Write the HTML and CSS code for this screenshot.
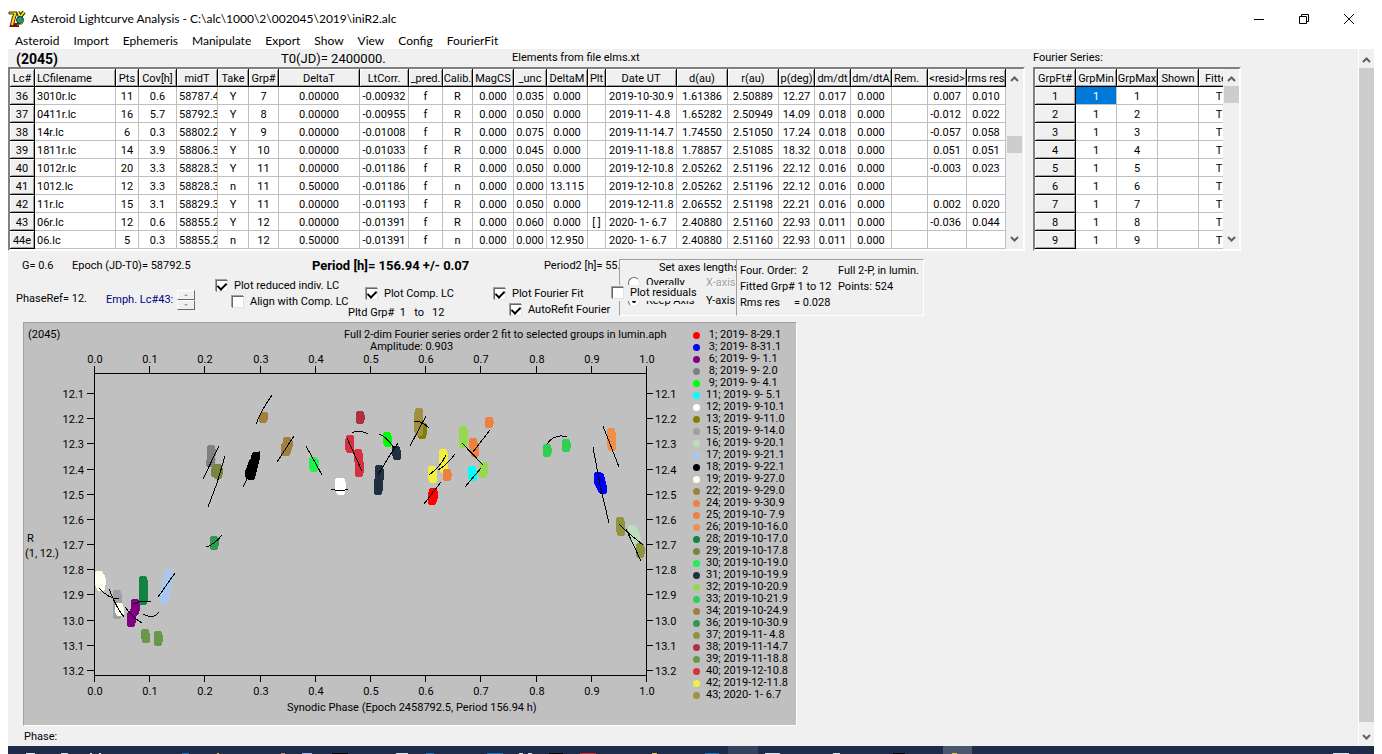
FILE: index.html
```html
<!DOCTYPE html>
<html lang="en">
<head>
<meta charset="utf-8">
<title>Asteroid Lightcurve Analysis</title>
<link rel="stylesheet" href="styles.css">
</head>
<body>
<header class="titlebar">
  <svg class="app-icon" width="18" height="18" viewBox="0 0 18 18" aria-hidden="true">
    <path d="M1 2h8v2L7 8H4l2-4H1z" fill="#f4e800" stroke="#3a3500" stroke-width="1"/>
    <path d="M10 2l2 5 4-5" fill="none" stroke="#222" stroke-width="4"/>
    <path d="M10 2l2 5 4-5" fill="none" stroke="#f4e800" stroke-width="2"/>
    <path d="M6 7l-2 8h7" fill="none" stroke="#7a1010" stroke-width="4"/>
    <path d="M6 7l-2 8" stroke="#f4e800" stroke-width="2"/>
    <circle cx="12" cy="10" r="3.500" fill="#1d9c6c" stroke="#10304a"/>
    <path d="M9 15l5-1 2-4" fill="none" stroke="#a08a10" stroke-width="1"/>
  </svg>
  <h1 class="title">Asteroid Lightcurve Analysis - C:\alc\1000\2\002045\2019\iniR2.alc</h1>
  <div class="window-buttons">
    <button type="button" aria-label="Minimize"><svg width="12" height="12" viewBox="0 0 12 12"><path d="M1 6.500h10" stroke="#000"/></svg></button>
    <button type="button" aria-label="Restore"><svg width="12" height="12" viewBox="0 0 12 12"><path d="M1.500 3.500h7v7h-7zM3.500 3.500v-2h7v7h-2" fill="none" stroke="#000"/></svg></button>
    <button type="button" aria-label="Close"><svg width="12" height="12" viewBox="0 0 12 12"><path d="M1 1l10 10M11 1L1 11" stroke="#000"/></svg></button>
  </div>
</header>
<nav class="menubar">
  <button type="button">Asteroid</button><button type="button">Import</button><button type="button">Ephemeris</button><button type="button">Manipulate</button><button type="button">Export</button><button type="button">Show</button><button type="button">View</button><button type="button">Config</button><button type="button">FourierFit</button>
</nav>
<main class="form">
  <div class="content">
    <div class="captions">
      <strong class="object">(2045)</strong><span class="big">T0(JD)= 2400000.</span><span>Elements from file elms.xt</span><span>Fourier Series:</span>
    </div>
    <div class="grids">
      <div class="sunken">
        <table class="grid lc" id="lc">
          <colgroup><col class="w25"><col class="w81"><col class="w23"><col class="w38"><col class="w41"><col class="w31"><col class="w30"><col class="w81"><col class="w49"><col class="w34"><col class="w30"><col class="w41"><col class="w33"><col class="w41"><col class="w18"><col class="w71"><col class="w51"><col class="w51"><col class="w36"><col class="w36"><col class="w41"><col class="w36"><col class="w39"><col class="w39"></colgroup>
          <thead><tr><th>Lc#</th><th class="left">LCfilename</th><th>Pts</th><th>Cov[h]</th><th>midT</th><th>Take</th><th>Grp#</th><th>DeltaT</th><th>LtCorr.</th><th>_pred.</th><th>Calib.</th><th>MagCS</th><th>_unc</th><th>DeltaM</th><th>Plt</th><th>Date UT</th><th>d(au)</th><th>r(au)</th><th>p(deg)</th><th>dm/dt</th><th>dm/dtA</th><th class="left">Rem.</th><th>&lt;resid&gt;</th><th>rms res</th></tr></thead>
          <tbody></tbody>
        </table>
        <div class="scrollbar"><svg class="chev" width="9" height="6" viewBox="0 0 9 6"><path d="M1 5l3.500-3.500L8 5" /></svg><i class="thumb mid"></i><svg class="chev" width="9" height="6" viewBox="0 0 9 6"><path d="M1 1l3.500 3.500L8 1"/></svg></div>
      </div>
      <div class="sunken">
        <div class="clip">
        <table class="grid ft" id="ft">
          <colgroup><col class="w41"><col class="w41"><col class="w41"><col class="w41"><col class="w41"></colgroup>
          <thead><tr><th>GrpFt#</th><th>GrpMin</th><th>GrpMax</th><th>Shown</th><th>Fitted</th></tr></thead>
          <tbody></tbody>
        </table>
        </div>
        <div class="scrollbar narrow"><svg class="chev" width="9" height="6" viewBox="0 0 9 6"><path d="M1 5l3.500-3.500L8 5"/></svg><i class="thumb top"></i><svg class="chev" width="9" height="6" viewBox="0 0 9 6"><path d="M1 1l3.500 3.500L8 1"/></svg></div>
      </div>
    </div>
    <section class="controls">
      <div class="settings">
        <div class="values"><span>G= 0.6</span><span>Epoch (JD-T0)= 58792.5</span><strong>Period [h]= 156.94 +/- 0.07</strong><span>Period2 [h]= 55.</span></div>
        <div class="options">
          <span class="phase-ref">PhaseRef= 12.</span>
          <span class="emph">Emph. Lc#43:</span>
          <div class="spinner"><button type="button" aria-label="Next"><i class="up"></i></button><button type="button" aria-label="Previous"><i class="down"></i></button></div>
          <div class="stack"><label><input type="checkbox" checked>Plot reduced indiv. LC</label><label class="indent"><input type="checkbox">Align with Comp. LC</label></div>
          <div class="stack low"><label class="comp"><input type="checkbox" checked>Plot Comp. LC</label><span class="pltd">Pltd Grp#&nbsp; 1 &nbsp; to &nbsp; 12</span></div>
          <div class="stack low"><label><input type="checkbox" checked>Plot Fourier Fit</label><label class="indent"><input type="checkbox" checked>AutoRefit Fourier</label></div>
        </div>
      </div>
      <fieldset class="panel axes">
        <span class="axes-title">Set axes lengths</span>
        <label><input type="radio" name="axes">Overally</label><span class="off">X-axis</span>
        <label><input type="radio" name="axes" checked>Keep Axis</label><span>Y-axis</span>
        <label class="residuals"><input type="checkbox">Plot residuals</label>
      </fieldset>
      <div class="panel stats">
        <span>Four. Order:&nbsp; 2</span><span>Full 2-P, in lumin.</span>
        <span>Fitted Grp# 1 to 12</span><span>Points: 524</span>
        <span class="rms"><span>Rms res</span><span>= 0.028</span></span>
      </div>
    </section>
    <section class="chart">
      <svg class="plot" width="664" height="402" viewBox="24 323 664 402" id="plot" role="img" aria-label="Lightcurve">
        <g id="axes" class="axis"></g>
        <g id="labels"></g>
        <text x="28" y="338">(2045)</text>
        <text x="344" y="338">Full 2-dim Fourier series order 2 fit to selected groups in lumin.aph</text>
        <text x="370" y="350">Amplitude: 0.903</text>
        <text x="27" y="542">R</text>
        <text x="25" y="557">(1, 12.)</text>
        <text x="287" y="711">Synodic Phase (Epoch 2458792.5, Period 156.94 h)</text>
        <g class="dots">
          <path stroke="#808080" d="M211 449v7M211 459v1M210 463l1-1"/>
          <path stroke="#7a8440" d="M216 468l-1 5M218 468v7"/>
          <path stroke="#a08040" d="M264 416l-1 3M287 441v3M289 444l-3 8M285 447v5"/>
          <path stroke="#000" d="M256 456l-2 7-3 13M253 463l-4 11"/>
          <path stroke="#20f050" d="M313 461l1 7M315 463l-1 3"/>
          <path stroke="#fff" d="M339 482l1 8M341 482v9"/>
          <path stroke="#b03040" d="M360 415v5"/>
          <path stroke="#d83040" d="M350 439l-1 6 1 4M358 453l1 9v11"/>
          <path stroke="#00ff00" d="M387 436l1 7"/>
          <path stroke="#203040" d="M396 450l1 6M379 469l1 8-2 5v9"/>
          <path stroke="#808000" d="M423 427l-1 8"/>
          <path stroke="#a09040" d="M419 412l-1 7 1 13"/>
          <path stroke="#f0f040" d="M443 453v13l1 3M432 470l1 9"/>
          <path stroke="#f08040" d="M447 473v4M473 442l2 11M489 421v3"/>
          <path stroke="#98d850" d="M463 430v14M484 466l-1 8"/>
          <path stroke="#00ffff" d="M472 470l1 7"/>
          <path stroke="#f00" d="M433 492l-1 9M434 494l-1 5"/>
          <path stroke="#30d050" d="M547 448v5M566 443v5"/>
          <path stroke="#f09048" d="M611 432l1 15"/>
          <path stroke="#00f" d="M598 476v5l4 8M600 477l3 13"/>
          <path stroke="#c0dcc0" d="M632 529l3 5 3 12M632 531l4 12"/>
          <path stroke="#909440" d="M620 521l1 11M640 547v7"/>
          <path stroke="#fffff0" d="M99 575v8l2 4M101 578v7"/>
          <path stroke="#a0a0a4" d="M117 594l1 12-1 9"/>
          <path stroke="#fffff0" d="M119 607l1 5"/>
          <path stroke="#800080" d="M135 603v8l-4 5v7"/>
          <path stroke="#108440" d="M143 580v21"/>
          <path stroke="#689848" d="M145 633l1 6M158 635v7"/>
          <path stroke="#a8c8f0" d="M169 573l-3 15-2 12M168 583l-5 13"/>
          <path stroke="#309850" d="M214 540v6"/>
        </g>
        <g class="fit">
          <path d="M219 446l-16 33M225 456l-8 27-9 24M272 395q-10 14-16 29M294 436l-17 26M260 451l-17 36M306 446l16 29M331 489h4M335 490h10M345 489h3M352 433q7-4 16 1M347 438l15 33M379 434q7 2 15 14M398 443l-10 15-10 17M426 416l-16 30M414 421q8 0 15 7M446 455q-5 11-17 20M455 454q-8 11-17 16M490 430l-17 22M462 443l21 22M481 468l-16 19M441 482l-17 22M547 444q8-11 20-7M603 426l16 41M593 447l7 38 9 38M619 524l7 7 17 14M626 529l15 32M99 588q10 11 20 11M109 589q8 20 15 28M125 607q9 12 17 16M134 604q8-4 17-2M143 614q10 6 16-2M175 573l-17 24M222 535q-8 10-16 12"/>
        </g>
      </svg>
      <ul class="legend" id="legend"></ul>
    </section>
    <div class="status"><div>Phase:</div><div>H:</div></div>
  </div>
  <div class="page-scroll"><svg class="chev" width="9" height="6" viewBox="0 0 9 6"><path d="M1 5l3.500-3.500L8 5"/></svg><i class="thumb"></i><svg class="chev" width="9" height="6" viewBox="0 0 9 6"><path d="M1 1l3.500 3.500L8 1"/></svg></div>
</main>
<footer class="taskbar" id="taskbar">
  <svg width="100%" height="8" aria-hidden="true">
    <path fill="#36415d" d="M720 0h30v8h-30z"/><path fill="#4c566e" d="M935 0h29v8h-29z"/>
    <path fill="#dde3ee" d="M18 7h9v1h-9zM53 7h7v1h-7zM82 7h2v1h-2zM91 7h2v1h-2zM388 7h12v1h-12zM511 7h4v1h-4zM520 7h4v1h-4zM757 7h15v1h-15zM825 7h7v1h-7zM1325 7h16v1h-16z"/>
    <path fill="#1976c4" d="M174 7h7v1h-7zM418 7h8v1h-8zM479 7h16v1h-16zM697 7h14v1h-14z"/>
    <path fill="#e2252a" d="M572 7h16v1h-16z"/>
    <path fill="#e3c83a" d="M209 7h2v1h-2zM644 7h5v1h-5zM944 7h5v1h-5z"/>
    <path fill="#000" d="M324 7h16v1h-16zM541 7h14v1h-14zM885 7h12v1h-12z"/>
    <path fill="#a9b2f0" d="M294 7h10v1h-10z"/><path fill="#c98a6a" d="M273 7h4v1h-4z"/>
  </svg>
</footer>
<script src="app.js"></script>
</body>
</html>
```

FILE: styles.css
```css
* { box-sizing: border-box; }
html, body { height: 100%; }
body {
  margin: 0;
  padding: 0 8px;
  display: flex;
  flex-direction: column;
  overflow: hidden;
  background: #fff;
  color: #000;
  font: 11px/16px Roboto, "Liberation Sans", Arial, sans-serif;
}
button { font: inherit; color: inherit; border: 0; padding: 0; background: none; }
.titlebar {
  display: flex;
  align-items: center;
  flex: none;
  height: 32px;
  padding-top: 6px;
  font: 12px/16px Lato, "Open Sans", sans-serif;
}
.title { font: inherit; margin: 0 0 0 5px; white-space: nowrap; flex: 1; }
.window-buttons { display: flex; padding-right: 3px; }
.window-buttons button { width: 45px; height: 18px; display: grid; place-items: center; }
.menubar {
  display: flex;
  flex: none;
  gap: 14px;
  height: 17px;
  padding-left: 7px;
  font: 12px/17px Lato, "Open Sans", sans-serif;
}
.form { display: flex; flex: 1; min-height: 0; background: #f0f0f0; overflow: hidden; }
.content { flex: 1; min-width: 0; overflow: hidden; }
.captions {
  display: grid;
  grid-template-columns: 265px 231px 521px auto;
  padding-left: 8px;
  height: 18px;
  line-height: 18px;
  white-space: nowrap;
}
.object { font-size: 14px; line-height: 20px; }
.big { font-size: 13px; line-height: 20px; }
.grids { display: flex; gap: 8px; }
.sunken {
  display: flex;
  flex: none;
  border: 2px solid;
  border-color: #808080 #fff #fff #808080;
  background: #fff;
}
.clip { width: 188px; overflow: hidden; }
.grid { table-layout: fixed; border-collapse: separate; border-spacing: 0; }
.lc { width: 996px; }
.ft { width: 205px; }
.w18 { width: 18px; } .w23 { width: 23px; } .w25 { width: 25px; } .w30 { width: 30px; }
.w31 { width: 31px; } .w33 { width: 33px; } .w34 { width: 34px; } .w36 { width: 36px; }
.w38 { width: 38px; } .w39 { width: 39px; } .w41 { width: 41px; } .w49 { width: 49px; }
.w51 { width: 51px; } .w71 { width: 71px; } .w81 { width: 81px; }
.grid th, .grid td {
  height: 18px;
  padding: 2px 0 0;
  overflow: hidden;
  white-space: pre;
  text-align: center;
  font-weight: normal;
  line-height: 15px;
  border-right: 1px solid #c0c0c0;
  border-bottom: 1px solid #c0c0c0;
}
.grid th {
  background: #f0f0f0;
  border-color: #000;
  box-shadow: inset 1px 1px #fff, inset -1px -1px #a0a0a0;
}
.grid .left { text-align: left; padding-left: 2px; }
.grid .right { text-align: right; padding-right: 5px; }
.grid .date { text-align: left; padding-left: 3px; }
.grid .selected { background: #0078d7; color: #fff; }
.scrollbar {
  width: 17px;
  display: flex;
  flex-direction: column;
  align-items: center;
  justify-content: space-between;
  padding: 7px 0;
  background: #f0f0f0;
}
.scrollbar.narrow { width: 16px; }
.thumb { display: block; width: 15px; height: 17px; background: #cdcdcd; }
.thumb.mid { margin-top: 54px; margin-bottom: auto; }
.thumb.top { margin-top: 4px; margin-bottom: auto; }
.chev { flex: none; fill: none; stroke: #606060; stroke-width: 2; }
.controls { display: flex; white-space: nowrap; }
.settings { width: 611px; padding-top: 6px; flex: none; }
.values {
  display: grid;
  grid-template-columns: 50px 240px 232px auto;
  padding-left: 14px;
  line-height: 18px;
}
.values strong { font-size: 13px; }
.options {
  display: grid;
  grid-template-columns: 90px 71px 39px 132px 146px auto;
  padding: 3px 0 0 8px;
  height: 45px;
}
.phase-ref { padding-top: 13px; }
.emph { padding-top: 14px; color: #000080; }
.spinner { display: flex; flex-direction: column; width: 18px; padding-top: 12px; }
.spinner button {
  height: 10px;
  display: grid;
  place-items: center;
  background: #f0f0f0;
  border: 1px solid;
  border-color: #fff #696969 #696969 #fff;
}
.up, .down { border: 2px solid transparent; }
.up { border-bottom-color: #a0a0a0; border-top: 0; }
.down { border-top-color: #a0a0a0; border-bottom: 0; }
.stack { display: flex; flex-direction: column; align-items: flex-start; }
.stack.low { padding-top: 8px; }
label { display: flex; align-items: center; height: 16px; }
.indent { margin-left: 16px; }
.comp { margin-left: 18px; }
.pltd { padding-top: 3px; }
input { appearance: none; margin: 0 6px 0 0; flex: none; }
input[type="checkbox"] {
  width: 12px;
  height: 12px;
  display: grid;
  place-items: center;
  background: #fff;
  border: 1px solid;
  border-color: #696969 #e3e3e3 #e3e3e3 #696969;
  box-shadow: -1px -1px #a0a0a0;
}
input[type="checkbox"]:checked::after {
  content: "";
  width: 4px;
  height: 7px;
  margin-top: -2px;
  border: solid #000;
  border-width: 0 2px 2px 0;
  transform: rotate(45deg);
}
input[type="radio"] {
  width: 12px;
  height: 12px;
  display: grid;
  place-items: center;
  border-radius: 50%;
  background: #fff;
  border: 1px solid;
  border-color: #696969 #e3e3e3 #e3e3e3 #696969;
}
input[type="radio"]:checked::after { content: ""; width: 4px; height: 4px; border-radius: 50%; background: #000; }
.panel {
  margin: 8px 0 0;
  height: 57px;
  border: 1px solid;
  border-color: #a0a0a0 #fff #fff #a0a0a0;
}
.axes {
  position: relative;
  min-width: 0;
  width: 117px;
  display: grid;
  grid-template-columns: 78px auto;
  grid-template-rows: 15px 18px 16px;
  padding: 0 0 0 8px;
  overflow: visible;
  border-right: 0;
}
.axes-title { grid-column: 1 / 3; padding-left: 31px; width: 108px; overflow: hidden; }
.off { color: #a0a0a0; text-shadow: 1px 1px #fff; }
.residuals {
  position: absolute;
  left: -8px;
  top: 25px;
  width: 84px;
  background: #f0f0f0;
}
.stats {
  width: 188px;
  display: grid;
  grid-template-columns: 98px auto;
  grid-template-rows: 16px 16px 16px;
  padding: 3px 0 0 3px;
}
.rms { display: grid; grid-template-columns: 54px auto; }
.chart {
  display: flex;
  width: 774px;
  margin: 2px 0 0 15px;
  background: #c0c0c0;
  border: 1px solid;
  border-color: #a0a0a0 #fff #fff #a0a0a0;
}
.plot { display: block; flex: none; fill: #000; }
.plot .mid { text-anchor: middle; }
.plot .end { text-anchor: end; }
.axis { stroke: #000; fill: none; shape-rendering: crispEdges; }
.dots { fill: none; stroke-width: 9px; stroke-linecap: round; stroke-linejoin: round; shape-rendering: crispEdges; }
.fit { fill: none; stroke: #000; stroke-width: 1px; shape-rendering: crispEdges; }
.legend { list-style: none; margin: 0; padding: 6px 0 0 5px; }
.legend li { display: flex; align-items: center; gap: 6px; height: 12px; line-height: 12px; white-space: pre; }
.legend svg { display: block; flex: none; }
.status { padding: 3px 0 0 16px; line-height: 15px; }
.page-scroll {
  width: 16px;
  flex: none;
  display: flex;
  flex-direction: column;
  align-items: center;
  padding: 8px 0 6px;
  border-left: 1px solid #fff;
}
.page-scroll .thumb { flex: 1; margin: 5px 0 12px; }
.taskbar { height: 8px; flex: none; background: #1f2b48; }
.taskbar svg { display: block; }
```

FILE: app.js
```javascript
const rows = [
  "36|3010r.lc|11|0.6|58787.4|Y|7|0.00000|-0.00932|f|R|0.000|0.035|0.000||2019-10-30.9|1.61386|2.50889|12.27|0.017|0.000||0.007|0.010",
  "37|0411r.lc|16|5.7|58792.3|Y|8|0.00000|-0.00955|f|R|0.000|0.050|0.000||2019-11- 4.8|1.65282|2.50949|14.09|0.018|0.000||-0.012|0.022",
  "38|14r.lc|6|0.3|58802.2|Y|9|0.00000|-0.01008|f|R|0.000|0.075|0.000||2019-11-14.7|1.74550|2.51050|17.24|0.018|0.000||-0.057|0.058",
  "39|1811r.lc|14|3.9|58806.3|Y|10|0.00000|-0.01033|f|R|0.000|0.045|0.000||2019-11-18.8|1.78857|2.51085|18.32|0.018|0.000||0.051|0.051",
  "40|1012r.lc|20|3.3|58828.3|Y|11|0.00000|-0.01186|f|R|0.000|0.050|0.000||2019-12-10.8|2.05262|2.51196|22.12|0.016|0.000||-0.003|0.023",
  "41|1012.lc|12|3.3|58828.3|n|11|0.50000|-0.01186|f|n|0.000|0.000|13.115||2019-12-10.8|2.05262|2.51196|22.12|0.016|0.000|||",
  "42|11r.lc|15|3.1|58829.3|Y|11|0.00000|-0.01193|f|R|0.000|0.050|0.000||2019-12-11.8|2.06552|2.51198|22.21|0.016|0.000||0.002|0.020",
  "43|06r.lc|12|0.6|58855.2|Y|12|0.00000|-0.01391|f|R|0.000|0.060|0.000|[ ]|2020- 1- 6.7|2.40880|2.51160|22.93|0.011|0.000||-0.036|0.044",
  "44e|06.lc|5|0.3|58855.2|n|12|0.50000|-0.01391|f|n|0.000|0.000|12.950||2020- 1- 6.7|2.40880|2.51160|22.93|0.011|0.000|||"
];
const align = { 1: "left", 4: "left", 15: "date", 22: "right" };
document.querySelector("#lc tbody").innerHTML = rows.map(r => "<tr>" + r.split("|").slice(0, 24).map((c, i) =>
  i === 0 ? `<th scope="row">${c}</th>` : `<td class="${align[i] || ""}">${c}</td>`).join("") + "</tr>").join("");

document.querySelector("#ft tbody").innerHTML = [1, 2, 3, 4, 5, 6, 7, 8, 9].map(n =>
  `<tr><th scope="row">${n}</th><td class="${n === 1 ? "selected" : ""}">1</td><td>${n}</td><td></td><td>T</td></tr>`).join("");

// Plot frame, ticks and tick labels
const xs = [94, 149, 204, 260, 315, 370, 425, 480, 536, 591, 646];
const ys = [393, 418, 443, 469, 494, 519, 544, 569, 594, 620, 645, 670];
let d = "M94.5 366V682M646.5 366V682M94 373.5H647M94 675.5H647";
let t = "";
xs.forEach((x, i) => {
  d += `M${x + 0.5} 366v7M${x + 0.5} 676v6`;
  const v = (i / 10).toFixed(1);
  t += `<text class="mid" x="${x + 1}" y="363">${v}</text><text class="mid" x="${x + 1}" y="695">${v}</text>`;
});
ys.forEach((y, i) => {
  d += `M87 ${y + 0.5}h7M647 ${y + 0.5}h6`;
  const v = (12.1 + i / 10).toFixed(1);
  t += `<text class="end" x="84" y="${y + 5}">${v}</text><text x="655" y="${y + 5}">${v}</text>`;
});
document.getElementById("axes").innerHTML = `<path d="${d}"/>`;
document.getElementById("labels").innerHTML = t;

const sets = [
  ["#ff0000", " 1; 2019- 8-29.1"], ["#0000ff", " 3; 2019- 8-31.1"], ["#800080", " 6; 2019- 9- 1.1"],
  ["#808080", " 8; 2019- 9- 2.0"], ["#00ff00", " 9; 2019- 9- 4.1"], ["#00ffff", "11; 2019- 9- 5.1"],
  ["#ffffff", "12; 2019- 9-10.1"], ["#808000", "13; 2019- 9-11.0"], ["#a0a0a4", "15; 2019- 9-14.0"],
  ["#c0dcc0", "16; 2019- 9-20.1"], ["#a8c8f0", "17; 2019- 9-21.1"], ["#000000", "18; 2019- 9-22.1"],
  ["#fffff0", "19; 2019- 9-27.0"], ["#a08040", "22; 2019- 9-29.0"], ["#f08040", "24; 2019- 9-30.9"],
  ["#f08040", "25; 2019-10- 7.9"], ["#f09048", "26; 2019-10-16.0"], ["#108440", "28; 2019-10-17.0"],
  ["#7a8440", "29; 2019-10-17.8"], ["#20f050", "30; 2019-10-19.0"], ["#203040", "31; 2019-10-19.9"],
  ["#98d850", "32; 2019-10-20.9"], ["#30d050", "33; 2019-10-21.9"], ["#a08040", "34; 2019-10-24.9"],
  ["#309850", "36; 2019-10-30.9"], ["#909440", "37; 2019-11- 4.8"], ["#b03040", "38; 2019-11-14.7"],
  ["#689848", "39; 2019-11-18.8"], ["#d83040", "40; 2019-12-10.8"], ["#f0f040", "42; 2019-12-11.8"],
  ["#a09040", "43; 2020- 1- 6.7"]
];
document.getElementById("legend").innerHTML = sets.map(([c, s]) =>
  `<li><svg width="7" height="7" viewBox="0 0 7 7"><circle cx="3.5" cy="3.5" r="3.5" fill="${c}"/></svg><span>${s}</span></li>`).join("");
```
